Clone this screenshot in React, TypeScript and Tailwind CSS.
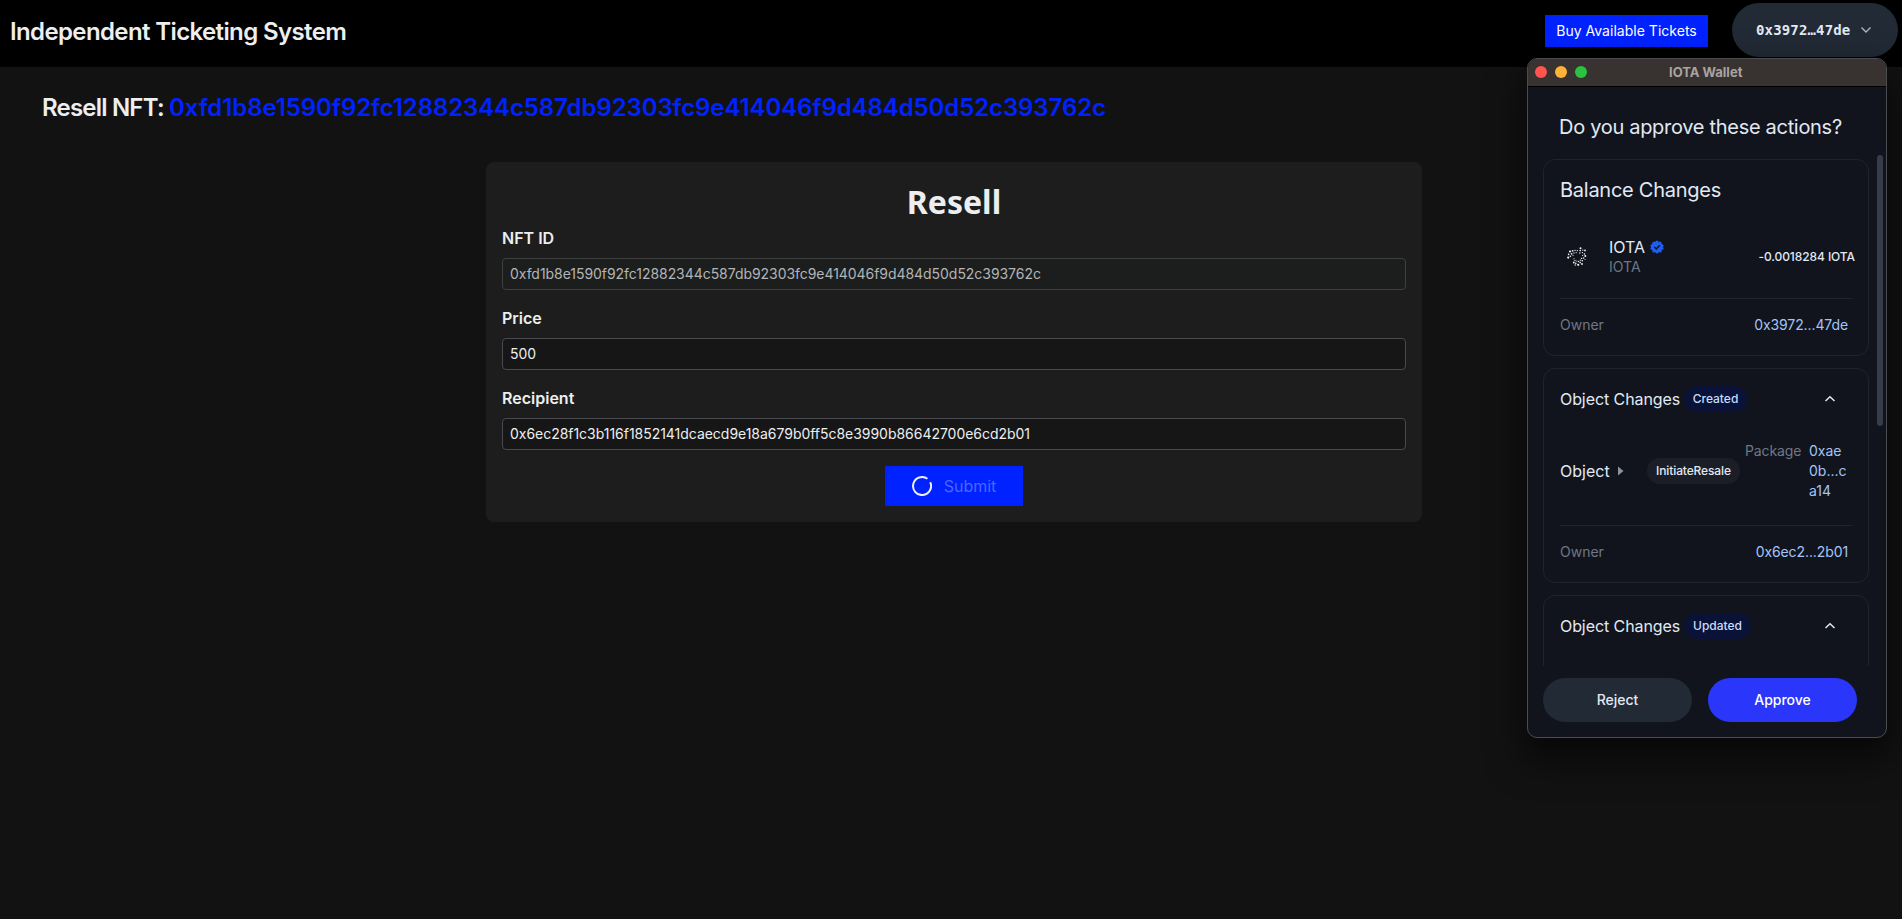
import type { ReactNode } from "react";

const NFT_ID = "0xfd1b8e1590f92fc12882344c587db92303fc9e414046f9d484d50d52c393762c";

function Header() {
  return (
    <header className="flex h-[67px] items-start justify-between bg-black pl-2.5 pr-1">
      <h1 className="mt-4 whitespace-nowrap text-2xl font-semibold leading-8 tracking-[-0.62px] text-[#edeef0]">
        Independent Ticketing System
      </h1>
      <div className="flex gap-6 pt-[3px]">
        <button className="mt-3 h-8 w-[163px] whitespace-nowrap bg-[#0022ff] text-sm tracking-[0.02px] text-white">
          Buy Available Tickets
        </button>
        <button className="flex h-[54px] w-[166px] items-center rounded-full bg-[#212a35] pl-6 text-[#e1e9f5]">
          <span className="w-[94px] whitespace-nowrap font-['DejaVu_Sans_Mono',monospace] text-sm font-bold tracking-[0.15px]">
            0x3972…47de
          </span>
          <svg className="ml-2.5" width="12" height="8" viewBox="0 0 12 8" fill="none" stroke="#a9b6c4" strokeWidth="1.4">
            <path d="M1.5 1.5 6 6l4.5-4.5" />
          </svg>
        </button>
      </div>
    </header>
  );
}

function Field({ label, value, disabled = false }: { label: string; value: string; disabled?: boolean }) {
  return (
    <div className="mb-4">
      <div className="mb-2 text-base font-semibold leading-6 text-[#edeef0]">{label}</div>
      <div
        className={
          disabled
            ? "flex h-8 items-center rounded-[4px] border border-[#3d403f] bg-[#1c1e1d] px-[7px] text-sm tracking-[-0.05px] text-[#b3b4b8]"
            : "flex h-8 items-center rounded-[4px] border border-[#494a50] bg-[#161616] px-[7px] text-sm tracking-[-0.03px] text-[#edeef0]"
        }
      >
        {value}
      </div>
    </div>
  );
}

function ResellForm() {
  return (
    <section className="ml-[486px] mt-[38px] h-[360px] w-[936px] rounded-lg bg-[#1d1d1d] px-4 pt-5">
      <h2 className="mb-1 text-center font-['Noto_Sans',sans-serif] text-[32px] font-bold leading-10 text-[#edeef0]">
        Resell
      </h2>
      <Field label="NFT ID" value={NFT_ID} disabled />
      <Field label="Price" value="500" />
      <Field label="Recipient" value="0x6ec28f1c3b116f1852141dcaecd9e18a679b0ff5c8e3990b86642700e6cd2b01" />
      <button className="mx-auto flex h-10 w-[138px] items-center justify-center gap-3 bg-[#0022ff] text-base text-[#4d64ff]">
        <svg width="20" height="20" viewBox="0 0 20 20" fill="none" stroke="#edeef6" strokeWidth="2">
          <path d="M18.2 6.2A9 9 0 1 1 15.4 2.8" />
        </svg>
        Submit
      </button>
    </section>
  );
}

const SWIRL: [number, number, number][] = [
  [13.5, 1.3, 1], [13.2, 3.6, 0.8], [12.8, 6, 0.7], [15.8, 3.1, 0.7], [15.4, 5.6, 0.7],
  [18, 3.4, 0.9], [17.4, 7, 0.8], [18.3, 9, 1], [15.6, 8.5, 0.6], [16.6, 11, 0.8],
  [14.6, 11.4, 0.7], [18, 12.4, 0.5], [3, 4.5, 1.1], [5.6, 3.8, 0.9], [8, 3.4, 0.7],
  [10.3, 3.6, 0.7], [4.6, 6.8, 0.9], [7, 5.9, 0.7], [1.6, 7.4, 0.8], [3.4, 9.2, 0.8],
  [1.2, 10.6, 1.1], [6, 8.5, 0.6], [9.2, 5.6, 0.6], [7, 11.8, 0.6], [8, 13.6, 0.7],
  [6.8, 15.5, 0.9], [8.8, 16.2, 0.8], [9.8, 14, 0.6], [11.6, 14.4, 0.7], [11.2, 17.8, 1.1],
  [13.2, 15.6, 0.8], [13.4, 13.2, 0.6], [15.3, 13.8, 0.8], [15, 17, 0.9], [8.2, 18, 0.7],
];

function IotaLogo() {
  return (
    <svg width="20" height="20" viewBox="0 0 20 20" fill="#eef2f8">
      {SWIRL.map(([x, y, r]) => (
        <circle key={`${x}-${y}`} cx={x} cy={y} r={r} />
      ))}
    </svg>
  );
}

function VerifiedIcon() {
  return (
    <svg width="14" height="14" viewBox="0 0 14 14">
      <path
        fill="#1f5cf0"
        d="M7 .3 8.8 1.8l2.4-.1.6 2.3 2 1.2L13 7l.8 2-2 1.1-.6 2.3-2.4-.1L7 13.7l-1.8-1.4-2.4.1-.6-2.3-2-1.1L1 7 .2 5.2l2-1.2.6-2.3 2.4.1z"
      />
      <path d="m4.4 7.1 1.9 1.8 3.5-3.6" fill="none" stroke="#11141c" strokeWidth="1.4" />
    </svg>
  );
}

function OwnerRow({ address }: { address: string }) {
  return (
    <div className="flex items-center justify-between border-t border-[#20242c] pr-1 pt-4 text-sm leading-5">
      <span className="text-[#6f7786]">Owner</span>
      <span className="tracking-[-0.1px] text-[#a3c4f7]">{address}</span>
    </div>
  );
}

function Card({ className, children }: { className: string; children?: ReactNode }) {
  return <div className={`w-[326px] shrink-0 rounded-xl border border-[#1f232b] px-4 ${className}`}>{children}</div>;
}

function ObjectChangesTitle({ badge, badgeWidth }: { badge: string; badgeWidth: string }) {
  return (
    <div className="flex h-[26px] items-center">
      <span className="w-[124px] whitespace-nowrap text-base tracking-[-0.08px] text-[#e1e9f5]">Object Changes</span>
      <span
        className={`flex h-[26px] items-center justify-center rounded-full bg-[#0a1238] text-xs font-medium text-[#c9dcfa] ${badgeWidth}`}
      >
        {badge}
      </span>
      <svg className="ml-auto mr-4" width="12" height="8" viewBox="0 0 12 8" fill="none" stroke="#e1e9f5" strokeWidth="1.5">
        <path d="M1.5 6 6 1.8 10.5 6" />
      </svg>
    </div>
  );
}

function WalletWindow() {
  return (
    <div className="absolute left-[1527px] top-[58px] flex h-[680px] w-[360px] flex-col overflow-hidden rounded-[10px] border border-[#4b4c50] bg-[#11141c] shadow-[0_18px_36px_4px_rgba(0,0,0,0.6)]">
      <div className="flex h-[28px] shrink-0 items-center border-b border-black bg-[#383331] pb-px pl-[7px]">
        <div className="flex w-[52px] gap-2">
          <span className="size-3 rounded-full bg-[#ff5450]" />
          <span className="size-3 rounded-full bg-[#ffb238]" />
          <span className="size-3 rounded-full bg-[#2ac23f]" />
        </div>
        <span className="ml-[82px] whitespace-nowrap pb-px text-[13px] font-bold leading-4 text-[#a8a4a2]">IOTA Wallet</span>
      </div>
      <div className="shrink-0 pl-[31px] pt-[26px] text-xl leading-7 tracking-[-0.3px] text-[#e1e9f5]">
        Do you approve these actions?
      </div>
      <div className="mt-3.5 flex h-[511px] shrink-0 overflow-hidden">
        <div className="flex w-[349px] shrink-0 flex-col gap-3 pl-[15px] pt-1">
          <Card className="h-[197px] pt-4">
            <div className="text-xl leading-7 tracking-[-0.26px] text-[#e1e9f5]">Balance Changes</div>
            <div className="mt-7 flex h-[50px] items-center">
              <span className="ml-[7px] w-[42px]">
                <IotaLogo />
              </span>
              <div className="flex-1">
                <div className="flex items-center gap-[5px] text-base leading-5 text-[#e1e9f5]">
                  IOTA <VerifiedIcon />
                </div>
                <div className="text-sm leading-5 text-[#6f7786]">IOTA</div>
              </div>
              <span className="-mr-[3px] whitespace-nowrap text-xs font-medium tracking-[-0.08px] text-[#e1e9f5]">
                -0.0018284 IOTA
              </span>
            </div>
            <div className="mt-4">
              <OwnerRow address="0x3972...47de" />
            </div>
          </Card>
          <Card className="h-[215px] pt-[17px]">
            <ObjectChangesTitle badge="Created" badgeWidth="w-[63px]" />
            <div className="mt-[29px] flex h-[60px] items-center">
              <span className="w-[58px] text-base text-[#e1e9f5]">Object</span>
              <svg width="6" height="10" viewBox="0 0 6 10" fill="#8b93a1">
                <path d="M0 0.5 5.5 5 0 9.5z" />
              </svg>
              <span className="ml-[23px] flex h-[26px] w-[93px] shrink-0 items-center justify-center rounded-full bg-[#1b1e27] text-xs font-medium tracking-[-0.12px] text-[#e1e9f5]">
                InitiateResale
              </span>
              <span className="ml-[5px] w-16 shrink-0 self-start text-sm leading-5 tracking-[-0.1px] text-[#6f7786]">
                Package
              </span>
              <span className="w-10 text-sm leading-5 text-[#a3c4f7]">
                0xae
                <br />
                0b...c
                <br />
                a14
              </span>
            </div>
            <div className="mt-6">
              <OwnerRow address="0x6ec2...2b01" />
            </div>
          </Card>
          <Card className="h-[215px] pt-[17px]">
            <ObjectChangesTitle badge="Updated" badgeWidth="w-[67px]" />
          </Card>
        </div>
        <div className="h-[271px] w-1.5 rounded-full bg-[#343d49]" />
      </div>
      <div className="flex gap-4 pl-[15px] pt-3">
        <button className="h-11 w-[149px] rounded-full bg-[#212a35] text-sm font-medium text-[#e1e9f5]">Reject</button>
        <button className="h-11 w-[149px] rounded-full bg-[#2a37fb] text-sm font-medium text-white">Approve</button>
      </div>
    </div>
  );
}

export default function App() {
  return (
    <div className="relative h-[919px] w-[1902px] overflow-hidden bg-[#121213] font-['Inter',sans-serif]">
      <Header />
      <main>
        <div className="whitespace-nowrap pl-[42px] pt-[25px] text-2xl font-semibold leading-8 tracking-[-0.8px] text-[#edeef0]">
          Resell NFT: <span className="tracking-[-0.1px] text-[#0022ff]">{NFT_ID}</span>
        </div>
        <ResellForm />
      </main>
      <WalletWindow />
    </div>
  );
}
